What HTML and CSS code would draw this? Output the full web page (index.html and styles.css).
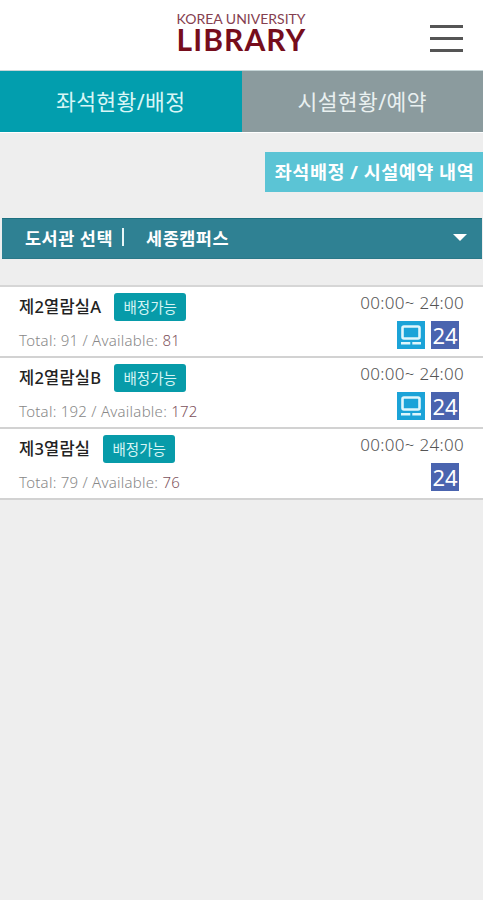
FILE: index.html
```
<!DOCTYPE html>
<html lang="ko">

<head>
    <meta charset="UTF-8">
    <meta name="viewport" content="width=device-width, initial-scale=1.0">
    <title>Korea University Library</title>
    <link rel="stylesheet" href="styles.css">
</head>

<body>
    <!-- header -->
    <header class="header">
        <div class="logo">
            <span class="logo-univ">KOREA UNIVERSITY</span>
            <span class="logo-library">LIBRARY</span>
        </div>
        <div class="menu-btn">
            <span></span>
            <span></span>
            <span></span>
        </div>
    </header>

    <!-- tabs -->
    <nav class="tabs">
        <a class="tab active">좌석현황/배정</a>
        <a class="tab">시설현황/예약</a>
    </nav>

    <div class="history">
        <a class="history-btn">좌석배정 / 시설예약 내역</a>
    </div>

    <!-- library select -->
    <div class="library-select">
        <span class="select-label">도서관 선택</span>
        <span class="select-bar"></span>
        <span class="select-value">세종캠퍼스</span>
        <span class="select-arrow"></span>
    </div>

    <!-- reading rooms -->
    <ul class="room-list">
        <li class="room">
            <div class="room-info">
                <div class="room-title">
                    <span class="room-name">제2열람실A</span>
                    <span class="badge">배정가능</span>
                </div>
                <p class="seats">Total: 91 / Available: <span class="count">81</span></p>
            </div>
            <div class="room-side">
                <span class="time">00:00~ 24:00</span>
                <div class="icons">
                    <svg class="icon-pc" viewBox="0 0 28 28">
                        <rect x="5.5" y="5.5" width="17" height="12" rx="1.5" />
                        <path d="M4 22.2h9.3M15.3 22.2h8.7" />
                    </svg>
                    <span class="icon-24">24</span>
                </div>
            </div>
        </li>
        <li class="room">
            <div class="room-info">
                <div class="room-title">
                    <span class="room-name">제2열람실B</span>
                    <span class="badge">배정가능</span>
                </div>
                <p class="seats">Total: 192 / Available: <span class="count">172</span></p>
            </div>
            <div class="room-side">
                <span class="time">00:00~ 24:00</span>
                <div class="icons">
                    <svg class="icon-pc" viewBox="0 0 28 28">
                        <rect x="5.5" y="5.5" width="17" height="12" rx="1.5" />
                        <path d="M4 22.2h9.3M15.3 22.2h8.7" />
                    </svg>
                    <span class="icon-24">24</span>
                </div>
            </div>
        </li>
        <li class="room">
            <div class="room-info">
                <div class="room-title">
                    <span class="room-name">제3열람실</span>
                    <span class="badge">배정가능</span>
                </div>
                <p class="seats">Total: 79 / Available: <span class="count">76</span></p>
            </div>
            <div class="room-side">
                <span class="time">00:00~ 24:00</span>
                <div class="icons">
                    <span class="icon-24">24</span>
                </div>
            </div>
        </li>
    </ul>
</body>

</html>
```
FILE: styles.css
```
* {
    box-sizing: border-box;
}

body {
    margin: 0;
    min-height: 100vh;
    background-color: #eeeeee;
    font-family: "Noto Sans", "Noto Sans CJK KR", sans-serif;
    white-space: nowrap;
}

/* header */
.header {
    display: grid;
    grid-template-columns: 1fr 130px 1fr;
    height: 71px;
    background-color: #fff;
    border-bottom: 1px solid #c5d5d7;
}

.logo {
    grid-column: 2;
    display: flex;
    flex-direction: column;
    padding-top: 10px;
}

.logo-univ {
    font-family: Lato, sans-serif;
    font-size: 14px;
    line-height: 17px;
    color: #85404f;
}

.logo-library {
    font-family: Lato, sans-serif;
    font-size: 30px;
    line-height: 24px;
    font-weight: 700;
    letter-spacing: 1.1px;
    color: #760d1c;
}

.menu-btn {
    justify-self: end;
    display: flex;
    flex-direction: column;
    gap: 9px;
    width: 33px;
    margin: 25px 20px 0 0;
}

.menu-btn span {
    height: 3px;
    background-color: #555;
}

/* tabs */
.tabs {
    display: flex;
    height: 62px;
    border-bottom: 1px solid #fff;
}

.tab {
    flex: 1;
    background-color: #8b9b9e;
    color: #e9f0f0;
    font-size: 21.5px;
    line-height: 62px;
    letter-spacing: 0.4px;
    text-align: center;
}

.tab.active {
    background-color: #029eae;
    color: #d8f6f6;
}

/* my reservations button */
.history {
    display: flex;
    justify-content: flex-end;
    margin-top: 19px;
}

.history-btn {
    width: 218px;
    height: 40px;
    padding-left: 1px;
    background-color: #5bc4d5;
    color: #fff;
    font-size: 18.5px;
    font-weight: 700;
    line-height: 40px;
    letter-spacing: 0.5px;
    text-align: center;
}

/* library select */
.library-select {
    display: flex;
    align-items: center;
    height: 41px;
    margin: 26px 1px 0 2px;
    padding: 0 15px 3px 23px;
    background-color: #2f8193;
    border-top: 1px solid #1d7080;
    border-bottom: 1px solid #2a7888;
    color: #fff;
    font-size: 17.5px;
    font-weight: 700;
    letter-spacing: 0.5px;
}

.select-bar {
    width: 2px;
    height: 18px;
    margin: 0 22px 0 9px;
    background-color: #e9f6f7;
}

.select-arrow {
    margin-left: auto;
    border: 7px solid transparent;
    border-top-color: #fff;
    border-bottom: 0;
}

/* reading rooms */
.room-list {
    margin: 26px 0 0;
    padding: 0;
    list-style: none;
    border-top: 2px solid #d6d6d6;
}

.room {
    display: flex;
    justify-content: space-between;
    height: 71px;
    padding: 0 19px;
    background-color: #fff;
    border-bottom: 2px solid #d2d2d2;
}

.room-title {
    display: flex;
    align-items: center;
    gap: 13px;
    height: 28px;
    margin-top: 6px;
}

.room-name {
    color: #222;
    font-size: 16.5px;
    font-weight: 500;
    line-height: 26px;
    letter-spacing: 0.2px;
}

.badge {
    width: 72px;
    height: 28px;
    border-radius: 3px;
    background-color: #079ba9;
    color: #d6f5f5;
    font-size: 14.5px;
    line-height: 28px;
    text-align: center;
}

.seats {
    margin: 9px 0 0;
    color: #888;
    font-size: 15px;
    font-weight: 300;
    line-height: 20px;
    letter-spacing: 0.25px;
}

.count {
    color: #80525c;
}

.room-side {
    display: flex;
    flex-direction: column;
    align-items: flex-end;
}

.time {
    margin-top: 5px;
    color: #555;
    font-size: 17px;
    font-weight: 300;
    line-height: 22px;
    letter-spacing: 0.3px;
}

.icons {
    display: flex;
    gap: 6px;
    margin: 7px 5px 0 0;
}

.icon-pc {
    width: 28px;
    height: 28px;
    background-color: #1ba3d8;
    fill: none;
    stroke: #dff6fc;
    stroke-width: 2.6;
}

.icon-24 {
    width: 28px;
    height: 28px;
    background-color: #4a64af;
    color: #fff;
    font-size: 22px;
    line-height: 28px;
    text-align: center;
}
```
